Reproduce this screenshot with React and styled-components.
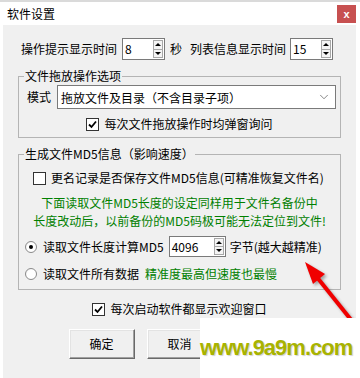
import React from 'react';
import styled, { createGlobalStyle } from 'styled-components';
import { ChevronDown } from 'lucide-react';

const GlobalStyle = createGlobalStyle`
  html, body { margin: 0; padding: 0; background: #fff; }
  body {
    font-family: "Noto Sans CJK SC", "Noto Sans", sans-serif;
    font-size: 12px;
    color: #000;
  }
  * { box-sizing: border-box; }
`;

const Window = styled.div`
  position: relative;
  width: 360px;
  height: 378px;
  overflow: hidden;
  background: #fff;
  display: flex;
  flex-direction: column;
`;

const TitleBar = styled.div`
  height: 25px;
  flex: none;
  border-top: 2px solid #dadada;
  display: flex;
  align-items: center;
  justify-content: space-between;
  padding: 0 4px 0 7px;
  background: #fff;
`;

const Title = styled.span`
  font-size: 12px;
  line-height: 16px;
`;

const CloseButton = styled.div`
  width: 19px;
  height: 18px;
  background: #c75050;
  color: #fff;
  font-family: "Liberation Sans", Arial, sans-serif;
  font-weight: bold;
  font-size: 11px;
  display: flex;
  align-items: center;
  justify-content: center;
`;

const Main = styled.div`
  flex: 1;
  display: flex;
`;

const Strip = styled.div`
  width: ${p => p.$w}px;
  flex: none;
  background: #fff;
`;

const Body = styled.div`
  width: 353px;
  flex: none;
  background: #f0f0f0;
  padding: 13px 15px 0 15px;
  display: flex;
  flex-direction: column;
`;

const Row = styled.div`
  display: flex;
  align-items: center;
  height: ${p => p.$h || 16}px;
  margin-top: ${p => p.$mt || 0}px;
  padding-left: ${p => p.$pl || 0}px;
  justify-content: ${p => (p.$center ? 'center' : 'flex-start')};
  white-space: nowrap;
`;

const Text = styled.span`
  line-height: 16px;
  margin-left: ${p => p.$ml || 0}px;
  color: ${p => p.$color || '#000'};
`;

const SpinBox = styled.div`
  width: ${p => p.$w}px;
  height: ${p => p.$h}px;
  margin-left: ${p => p.$ml || 0}px;
  display: flex;
  background: #fff;
  border: 1px solid #7a7a7a;
  padding: 1px;
`;

const SpinValue = styled.span`
  flex: 1;
  display: flex;
  align-items: center;
  padding-left: 1px;
  line-height: 16px;
`;

const SpinButtons = styled.div`
  width: 10px;
  display: flex;
  flex-direction: column;
  border: 1px solid #a8a8a8;
  background: #f4f4f4;
`;

const SpinArrow = styled.div`
  flex: 1;
  display: flex;
  align-items: center;
  justify-content: center;
  & + & { border-top: 1px solid #a8a8a8; }
  &::after {
    content: '';
    border-left: 3px solid transparent;
    border-right: 3px solid transparent;
    ${p => (p.$down ? 'border-top: 3px solid #000;' : 'border-bottom: 3px solid #000;')}
  }
`;

const Group = styled.fieldset`
  margin: 8px 0 0;
  padding: 1px 0 ${p => p.$pb || 5}px;
  border: 1px solid #b4b4b4;
  min-width: 0;
`;

const Legend = styled.legend`
  margin-left: 5px;
  padding: 0 1px;
  line-height: 16px;
  font-size: 12px;
`;

const Select = styled.div`
  width: 279px;
  height: 24px;
  margin-left: 6px;
  background: #fff;
  border: 1px solid #7a7a7a;
  display: flex;
  align-items: center;
  justify-content: space-between;
  padding: 0 4px 0 3px;
`;

const CheckBox = styled.span`
  width: 13px;
  height: 13px;
  flex: none;
  border: 1px solid #333;
  background: #fff;
  display: flex;
  align-items: center;
  justify-content: center;
`;

const Radio = styled.span`
  width: 12px;
  height: 12px;
  flex: none;
  border-radius: 50%;
  border: 1px solid #8a8a8a;
  background: radial-gradient(circle at 60% 60%, #fff 55%, #e4e4e4 100%);
  display: flex;
  align-items: center;
  justify-content: center;
  &::after {
    content: '';
    width: 4px;
    height: 4px;
    border-radius: 50%;
    background: ${p => (p.$on ? '#000' : 'transparent')};
  }
`;

const Notes = styled.div`
  margin-top: 8px;
  text-align: center;
  line-height: 18px;
  color: #008000;
  white-space: nowrap;
`;

const ButtonRow = styled.div`
  display: flex;
  justify-content: center;
  gap: 12px;
  margin-top: 12px;
`;

const Button = styled.div`
  width: 66px;
  height: 30px;
  display: flex;
  align-items: center;
  justify-content: center;
  background: #f0f0f0;
  border: 1px solid;
  border-color: #fff #696969 #696969 #fff;
  box-shadow: inset -1px -1px 0 #a0a0a0, inset 1px 1px 0 #e3e3e3;
  line-height: 16px;
`;

const Watermark = styled.div`
  position: absolute;
  left: 200px;
  top: 318px;
  width: 160px;
  height: 60px;
  background: #fff;
  display: flex;
  align-items: center;
  font-family: "Liberation Sans", Arial, sans-serif;
  font-weight: bold;
  font-size: 22px;
  letter-spacing: -1px;
  color: #a8b300;
  text-shadow: 1px 1px 1px rgba(0, 0, 0, 0.18);
`;

const ArrowLayer = styled.svg`
  position: absolute;
  left: 0;
  top: 0;
  pointer-events: none;
`;

const Check = () => (
  <CheckBox>
    <svg width="11" height="11" viewBox="0 0 11 11">
      <path d="M2 5.5 L4.5 8 L9 2.5" fill="none" stroke="#000" strokeWidth="1.8" />
    </svg>
  </CheckBox>
);

const Spinner = ({ value, w, h = 22, ml }) => (
  <SpinBox $w={w} $h={h} $ml={ml}>
    <SpinValue>{value}</SpinValue>
    <SpinButtons>
      <SpinArrow />
      <SpinArrow $down />
    </SpinButtons>
  </SpinBox>
);

export default function App() {
  return (
    <>
      <GlobalStyle />
      <Window>
        <TitleBar>
          <Title>软件设置</Title>
          <CloseButton>x</CloseButton>
        </TitleBar>
        <Main>
          <Strip $w={3} />
          <Body>
            <Row $h={22} $pl={3}>
              <Text>操作提示显示时间</Text>
              <Spinner value="8" w={43} ml={5} />
              <Text $ml={5}>秒</Text>
              <Text $ml={8}>列表信息显示时间</Text>
              <Spinner value="15" w={43} ml={4} />
            </Row>

            <Group>
              <Legend>文件拖放操作选项</Legend>
              <Row $h={24} $pl={8}>
                <Text>模式</Text>
                <Select>
                  <span>拖放文件及目录（不含目录子项）</span>
                  <ChevronDown size={14} strokeWidth={1} color="#333" />
                </Select>
              </Row>
              <Row $mt={7} $center>
                <Check />
                <Text $ml={5}>每次文件拖放操作时均弹窗询问</Text>
              </Row>
            </Group>

            <Group $pb={7}>
              <Legend>生成文件MD5信息（影响速度）</Legend>
              <Row $mt={7} $pl={14}>
                <CheckBox />
                <Text $ml={5}>更名记录是否保存文件MD5信息(可精准恢复文件名)</Text>
              </Row>
              <Notes>
                下面读取文件MD5长度的设定同样用于文件名备份中
                <br />
                长度改动后，以前备份的MD5码极可能无法定位到文件!
              </Notes>
              <Row $h={21} $mt={6} $pl={6}>
                <Radio $on />
                <Text $ml={6}>读取文件长度计算MD5</Text>
                <Spinner value="4096" w={57} h={21} ml={5} />
                <Text $ml={4}>字节(越大越精准)</Text>
              </Row>
              <Row $mt={9} $pl={6}>
                <Radio />
                <Text $ml={6}>读取文件所有数据</Text>
                <Text $ml={6} $color="#008000">精准度最高但速度也最慢</Text>
              </Row>
            </Group>

            <Row $mt={11} $center>
              <Check />
              <Text $ml={5}>每次启动软件都显示欢迎窗口</Text>
            </Row>

            <ButtonRow>
              <Button>确定</Button>
              <Button>取消</Button>
              <Button />
            </ButtonRow>
          </Body>
          <Strip $w={4} />
        </Main>

        <ArrowLayer width="360" height="378" viewBox="0 0 360 378">
          <defs>
            <filter id="blur" x="-20%" y="-20%" width="140%" height="140%">
              <feGaussianBlur stdDeviation="1.5" />
            </filter>
          </defs>
          <g transform="translate(2 2)" filter="url(#blur)" opacity="0.45">
            <line x1="316" y1="276" x2="356" y2="326" stroke="#444" strokeWidth="4" />
            <polygon points="305,262 325,274 313,284" fill="#444" />
          </g>
          <line x1="316" y1="276" x2="356" y2="326" stroke="#f00000" strokeWidth="4" />
          <polygon points="305,262 325,274 313,284" fill="#f00000" />
        </ArrowLayer>

        <Watermark>www.9a9m.com</Watermark>
      </Window>
    </>
  );
}
